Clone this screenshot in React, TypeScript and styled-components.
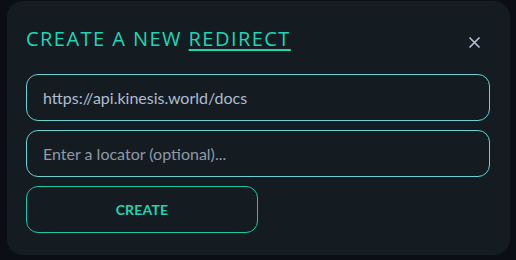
import React, { useState } from "react";
import styled, { createGlobalStyle } from "styled-components";

const GlobalStyle = createGlobalStyle`
  html, body {
    margin: 0;
    background: #0c0e15;
  }
  body {
    padding: 1px 6px 5px 7px;
    font-family: "Open Sans", "Liberation Sans", sans-serif;
  }
`;

const Modal = styled.div`
  box-sizing: border-box;
  width: 503px;
  height: 254px;
  background: #141c22;
  border-radius: 16px;
  padding: 0 20px 0 19px;
  display: flex;
  flex-direction: column;
`;

const Header = styled.div`
  height: 73px;
  padding-top: 2px;
  box-sizing: border-box;
  display: flex;
  align-items: center;
  justify-content: space-between;
`;

const Title = styled.h2`
  margin: 0;
  font-family: "Open Sans", "Liberation Sans", sans-serif;
  font-weight: 400;
  font-size: 20px;
  line-height: 24px;
  letter-spacing: 1.45px;
  color: #1fd6b4;

  span {
    text-decoration: underline;
    text-decoration-thickness: 1.5px;
    text-underline-offset: 3px;
  }
`;

const CloseButton = styled.button`
  margin-top: 8px;
  margin-right: 8px;
  width: 16px;
  height: 16px;
  padding: 0;
  border: none;
  background: none;
  display: flex;
  align-items: center;
  justify-content: center;
  cursor: pointer;
  color: #b3bfd3;
`;

const Form = styled.form`
  display: flex;
  flex-direction: column;
  gap: 9px;
`;

const Field = styled.input`
  box-sizing: border-box;
  width: 100%;
  height: 47px;
  padding: 0 16px;
  border: 1.5px solid #6cd0d4;
  border-radius: 12px;
  background: transparent;
  font-family: "Lato", "Open Sans", sans-serif;
  font-size: 16px;
  color: #aebdd1;
  outline: none;

  &::placeholder {
    color: #8d99a8;
  }
`;

const SubmitButton = styled.button`
  box-sizing: border-box;
  width: 232px;
  height: 47px;
  border: 1.5px solid #19c9a5;
  border-radius: 12px;
  background: transparent;
  font-family: "Lato", "Open Sans", sans-serif;
  font-weight: 700;
  font-size: 14px;
  letter-spacing: 0.2px;
  color: #22d3b0;
  cursor: pointer;
`;

const App: React.FC = () => {
  const [url, setUrl] = useState("https://api.kinesis.world/docs");
  const [locator, setLocator] = useState("");

  return (
    <>
      <GlobalStyle />
      <Modal>
        <Header>
          <Title>
            CREATE A NEW <span>REDIRECT</span>
          </Title>
          <CloseButton aria-label="Close">
            <svg width="11" height="11" viewBox="0 0 11 11">
              <path
                d="M1 1 L10 10 M10 1 L1 10"
                stroke="currentColor"
                strokeWidth="1.7"
                strokeLinecap="round"
              />
            </svg>
          </CloseButton>
        </Header>
        <Form onSubmit={e => e.preventDefault()}>
          <Field value={url} onChange={e => setUrl(e.target.value)} />
          <Field
            value={locator}
            placeholder="Enter a locator (optional)..."
            onChange={e => setLocator(e.target.value)}
          />
          <SubmitButton type="submit">CREATE</SubmitButton>
        </Form>
      </Modal>
    </>
  );
};

export default App;
